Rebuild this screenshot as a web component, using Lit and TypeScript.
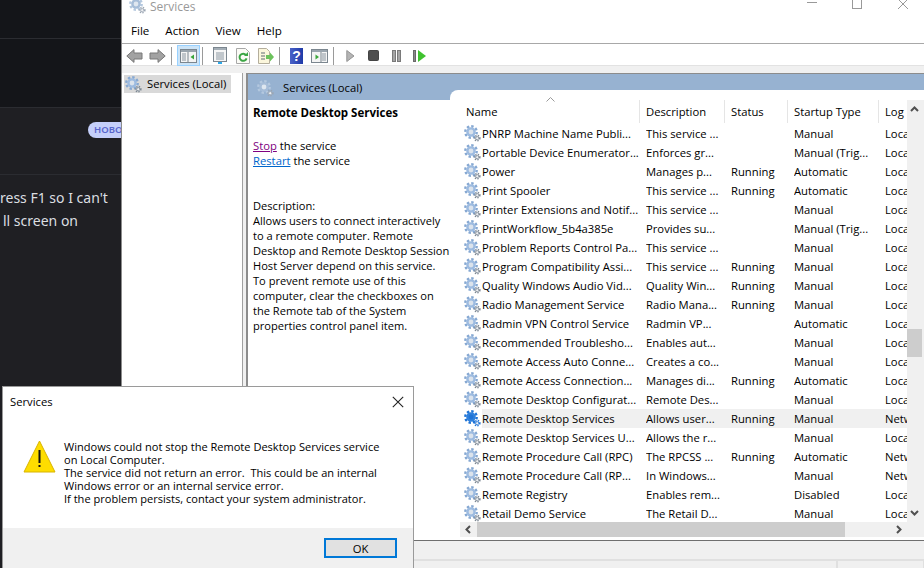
import { LitElement, html, css, svg } from "lit";
import { customElement } from "lit/decorators.js";

type Row = [string, string, string, string, string];
const rows: Row[] = [
  ["PNRP Machine Name Publi...", "This service ...", "", "Manual", "Local"],
  ["Portable Device Enumerator...", "Enforces gr...", "", "Manual (Trig...", "Local"],
  ["Power", "Manages p...", "Running", "Automatic", "Local"],
  ["Print Spooler", "This service ...", "Running", "Automatic", "Local"],
  ["Printer Extensions and Notif...", "This service ...", "", "Manual", "Local"],
  ["PrintWorkflow_5b4a385e", "Provides su...", "", "Manual (Trig...", "Local"],
  ["Problem Reports Control Pa...", "This service ...", "", "Manual", "Local"],
  ["Program Compatibility Assi...", "This service ...", "Running", "Manual", "Local"],
  ["Quality Windows Audio Vid...", "Quality Win...", "Running", "Manual", "Local"],
  ["Radio Management Service", "Radio Mana...", "Running", "Manual", "Local"],
  ["Radmin VPN Control Service", "Radmin VP...", "", "Automatic", "Local"],
  ["Recommended Troublesho...", "Enables aut...", "", "Manual", "Local"],
  ["Remote Access Auto Conne...", "Creates a co...", "", "Manual", "Local"],
  ["Remote Access Connection...", "Manages di...", "Running", "Automatic", "Local"],
  ["Remote Desktop Configurat...", "Remote Des...", "", "Manual", "Local"],
  ["Remote Desktop Services", "Allows user...", "Running", "Manual", "Network"],
  ["Remote Desktop Services U...", "Allows the r...", "", "Manual", "Local"],
  ["Remote Procedure Call (RPC)", "The RPCSS ...", "Running", "Automatic", "Network"],
  ["Remote Procedure Call (RP...", "In Windows...", "", "Manual", "Network"],
  ["Remote Registry", "Enables rem...", "", "Disabled", "Local"],
  ["Retail Demo Service", "The Retail D...", "", "Manual", "Local"],
];

const gear = (sel = false, dim = false) => {
  const a = sel ? "#1f74d6" : dim ? "#b4c8df" : "#86a8d2";
  const b = sel ? "#2f80dc" : dim ? "#a6bdd8" : "#9dbbe0";
  const h = sel ? "#1f74d6" : dim ? "#dfe7f0" : "#dbe3ec";
  const c = sel ? "#1f74d6" : dim ? "#9aa5b2" : "#7c8894";
  return html`<svg class="gear" width="17" height="17" viewBox="0 0 17 17">
    <circle cx="7" cy="7" r="5.7" fill="none" stroke=${a} stroke-width="2.4" stroke-dasharray="2.4 2"></circle>
    <circle cx="7" cy="7" r="3.6" fill=${h} stroke=${b} stroke-width="2.4"></circle>
    <circle cx="13.2" cy="13.2" r="2.6" fill="none" stroke=${c} stroke-width="1.6" stroke-dasharray="1.3 1.2"></circle>
    <circle cx="13.2" cy="13.2" r="1.6" fill="#eef0f2" stroke=${c} stroke-width=".8"></circle>
  </svg>`;
};

const winIcon = (inner: unknown) => html`<svg width="17" height="16" viewBox="0 0 17 16">
  <rect x=".5" y="1.5" width="16" height="13" fill="#f4f4f4" stroke="#7b868f"></rect>
  <rect x="1" y="2" width="15" height="2" fill="#9aa5ae"></rect>
  ${inner}
</svg>`;

const tools = {
  back: html`<svg width="17" height="16" viewBox="0 0 17 16"><path d="M.8 8 8 1.6V5h8v6H8v3.4Z" fill="#a2a2a2" stroke="#787878"></path></svg>`,
  fwd: html`<svg width="17" height="16" viewBox="0 0 17 16"><path d="M16.2 8 9 1.6V5H1v6h8v3.4Z" fill="#a2a2a2" stroke="#787878"></path></svg>`,
  tree: winIcon(svg`<path d="M2 6h4M2 8h4M2 10h4M2 12h4" stroke="#8a96a0"></path><path d="M8 4v10" stroke="#7b868f"></path><path d="M14 6.5v5L10.5 9Z" fill="#3aa63a"></path>`),
  props: html`<svg width="16" height="17" viewBox="0 0 16 17"><rect x="1.5" y=".5" width="13" height="14" fill="#f6f6f6" stroke="#7b868f"></rect><rect x="2" y="1" width="12" height="2" fill="#a4aeb6"></rect><path d="M4 6h8M4 8h8M4 10h8M4 12h8" stroke="#8c98a2"></path><rect x="6" y="15" width="4" height="2" fill="#2fa8e8"></rect></svg>`,
  refresh: html`<svg width="14" height="16" viewBox="0 0 14 16"><path d="M.5.5h9l4 4v11H.5Z" fill="#fbfbf6" stroke="#a8a8a8"></path><path d="M10 7a3.6 3.6 0 1 0 .6 3.4" fill="none" stroke="#3ba544" stroke-width="2"></path><path d="M8 8h4V4Z" fill="#3ba544"></path></svg>`,
  exp: html`<svg width="16" height="16" viewBox="0 0 16 16"><path d="M.5.5h8l3 3v12H.5Z" fill="#fbf6dc" stroke="#b4ae9c"></path><path d="M3 5h4M3 8h4M3 11h4" stroke="#5f6a72"></path><path d="M8 7h4V4.5L16 9l-4 4.5V11H8Z" fill="#6cc25c"></path></svg>`,
  help: html`<svg width="13" height="16" viewBox="0 0 13 16"><defs><linearGradient id="hg" x1="0" x2="1" y1="0" y2="0"><stop offset="0" stop-color="#4a62c8"></stop><stop offset="1" stop-color="#1f3aa8"></stop></linearGradient></defs><rect width="13" height="16" fill="url(#hg)"></rect><text x="6.5" y="13" text-anchor="middle" font-family="Liberation Sans" font-weight="700" font-size="14" fill="#fff">?</text></svg>`,
  wnd2: winIcon(svg`<path d="M10 4v10" stroke="#7b868f"></path><path d="M11 6h4M11 8h4M11 10h4M11 12h4" stroke="#8a96a0"></path><path d="M4.500 6.500v5L8 9Z" fill="#3aa63a"></path>`),
  play: html`<svg width="9" height="16" viewBox="0 0 9 16"><path d="M.8 2.500 8 8 .8 13.500Z" fill="#b4b4b4" stroke="#949494"></path></svg>`,
  stop: html`<svg width="11" height="11" viewBox="0 0 11 11"><rect x=".5" y=".5" width="10" height="10" rx="1" fill="#4e4e4e" stroke="#444"></rect></svg>`,
  pause: html`<svg width="9" height="12" viewBox="0 0 9 12"><rect x=".5" y=".5" width="3" height="11" fill="#a4a4a4" stroke="#7a7a7a"></rect><rect x="5.500" y=".5" width="3" height="11" fill="#a4a4a4" stroke="#7a7a7a"></rect></svg>`,
  resume: html`<svg width="13" height="12" viewBox="0 0 13 12"><rect x=".5" y=".5" width="2" height="11" fill="#8a8a8a" stroke="#6a6a6a"></rect><path d="M5 0 13 6 5 12Z" fill="#3fc22f"></path></svg>`,
};

@customElement("app-root")
export class AppRoot extends LitElement {
  static styles = css`
    :host { display: block; width: 924px; height: 568px; overflow: hidden; position: relative; font-family: "Open Sans", "Noto Sans", sans-serif; font-size: 11.25px; color: #000; }
    .page { display: flex; width: 924px; height: 568px; }

    .dark { width: 121px; flex: none; background: #1f1f23; display: flex; flex-direction: column; overflow: hidden; font-family: "Noto Sans", sans-serif; color: #dbdee1; }
    .d1 { height: 38px; background: #141519; border-bottom: 1px solid #2b2c31; flex: none; }
    .d2 { height: 68px; background: #141519; border-bottom: 1px solid #2b2c31; flex: none; }
    .d3 { border-bottom: 1px solid #2b2c31; flex: none; display: flex; justify-content: flex-end; align-items: flex-start; padding-top: 14px; height: 52px; }
    .badge { width: 33px; height: 16px; background: #c5cffa; border-radius: 8px 0 0 8px; color: #5865cc; font-size: 9.5px; font-weight: 600; line-height: 16px; padding-left: 6px; box-sizing: border-box; white-space: nowrap; overflow: hidden; }
    .msg { padding-top: 11px; font-size: 14px; line-height: 23px; white-space: nowrap; }
    .l2 { display: block; padding-left: 3px; }

    .win { flex: 1; min-width: 0; display: flex; flex-direction: column; background: #fff; border-left: 1px solid #8c8c8c; }
    .title { height: 18px; flex: none; display: flex; align-items: center; color: #999; position: relative; padding-left: 7px; gap: 4px; margin-top: -3px; }
    .title .gear { margin-top: -1px; }
    .title span { font-size: 12px; }
    .ctl { position: absolute; top: 0; }
    .menu { height: 29px; flex: none; display: flex; align-items: center; border-bottom: 1px solid #a8a8a8; box-sizing: border-box; padding: 3px 0 0 9px; gap: 16px; font-size: 11.6px; }
    .tb { height: 22px; flex: none; display: flex; align-items: flex-start; padding: 1px 0 0 1px; box-sizing: border-box; border-bottom: 1px solid #e2e2e2; }
    .btn { width: 23px; height: 21px; display: flex; align-items: center; justify-content: center; box-sizing: border-box; flex: none; }
    .btn.on { background: #cce4f7; border: 1px solid #99d1ff; }
    .sep { width: 1px; height: 18px; background: #9a9a9a; margin: 2px 5px 0 2px; flex: none; }
    .body { flex: 1; min-height: 0; display: flex; background: #f0f0f0; padding-top: 7px; }
    .tree { flex: none; background: #fff; border-right: 1px solid #a0a0a0; padding: 2px 3px 2px 2px; width: 115px; }
    .tnode { height: 18px; width: 107px; background: #d9d9d9; display: flex; align-items: center; gap: 5px; padding-left: 1px; box-sizing: border-box; white-space: nowrap; }
    .tnode .gear { flex: none; }
    .tnode span { margin-top: -1px; }
    .main { margin-left: 3px; flex: 1; min-width: 0; display: flex; flex-direction: column; border-left: 2px solid #8c8c8c; border-top: 1px solid #8c8c8c; background: #fff; }
    .hdr { height: 26px; flex: none; background: #97b2d1; display: flex; align-items: flex-start; padding: 6px 0 0 9px; box-sizing: border-box; gap: 9px; white-space: nowrap; }
    .cols { flex: 1; min-height: 0; display: flex; }
    .detail { width: 197px; flex: none; padding: 4px 0 0 5px; line-height: 15px; color: #000; white-space: nowrap; }
    .detail h3 { margin: 0 0 17px; font-size: 11.5px; font-weight: 700; line-height: 17px; }
    .detail a { text-decoration: underline; color: #0066cc; }
    .detail a.v { color: #800080; }
    .detail .desc { margin-top: 30px; font-size: 11.1px; }
    .list { flex: 1; min-width: 0; margin-top: -10px; background: #fff; border-top-left-radius: 8px; display: grid; grid-template-columns: 1fr 17px; grid-template-rows: 1fr 15px; }
    .tbl { overflow: hidden; padding-top: 10px; display: flex; flex-direction: column; min-width: 0; min-height: 0; }
    .head { display: grid; grid-template-columns: 16px 180px 85px 63px 91px 40px; white-space: nowrap; flex: none; height: 24px; line-height: 24px; }
    .row { display: grid; grid-template-columns: 32px 164px 85px 63px 91px 40px; white-space: nowrap; height: 19px; line-height: 19px; }
    .head div { position: relative; }
    .head div.c + div.c::before { content: ""; position: absolute; left: -7px; top: 0; height: 23px; width: 1px; background: #e5e5e5; }
    .caret { position: absolute; left: 80px; top: -3px; }
    .rows { flex: 1; min-height: 0; overflow: hidden; }
    .row div { overflow: hidden; }
    .ic { padding: 1px 0 0 14px; box-sizing: border-box; height: 19px; }
    .ic .gear { display: block; }
    .row.sel div { background: #f0f0f0; }
    .vs { grid-row: 1 / 3; grid-column: 2; background: #f0f0f0; margin-top: 10px; position: relative; }
    .hs { background: #f0f0f0; position: relative; height: 15px; margin-left: 10px; }
    .vs .th { position: absolute; left: 0; top: 229px; width: 15px; height: 28px; background: #cdcdcd; }
    .hs .th { position: absolute; left: 17px; top: 0; width: 368px; height: 15px; background: #cdcdcd; }
    .arr { position: absolute; }
    .gapb { height: 3px; flex: none; background: #fff; }
    .status { height: 28px; flex: none; border-top: 1px solid #6f6f6f; background: #f0f0f0; box-sizing: border-box; display: flex; flex-direction: column; }
    .s1 { height: 18px; flex: none; border-bottom: 2px solid #e0e0e0; }
    .s2 { flex: 1; display: flex; justify-content: flex-end; }
    .s2 i { display: block; width: 85px; border-left: 2px solid #e0e0e0; border-right: 1px solid #e0e0e0; }

    .dlg { position: absolute; left: 2px; top: 386px; width: 412px; height: 182px; box-sizing: border-box; background: #fff; border: 1px solid #9a9a9a; border-bottom: 0; display: flex; flex-direction: column; }
    .dt { height: 29px; flex: none; display: flex; align-items: center; justify-content: space-between; padding: 0 9px 0 7px; }
    .dm { flex: 1; display: flex; padding: 24px 0 0 20px; gap: 8px; }
    .dm svg { flex: none; }
    .dm p { margin: 0; font-size: 11.05px; line-height: 13px; white-space: nowrap; }
    .df { height: 40px; flex: none; background: #f0f0f0; display: flex; justify-content: flex-end; padding: 10px 16px 0 0; box-sizing: border-box; }
    .ok { width: 73px; height: 20px; box-sizing: border-box; border: 2px solid #0078d7; background: #e1e1e1; display: flex; align-items: center; justify-content: center; }
  `;

  render() {
    return html`<div class="page">
      <div class="dark">
        <div class="d1"></div>
        <div class="d2"></div>
        <div class="d3"><div class="badge">HOBOE</div></div>
        <div class="msg">ress F1 so I can't<span class="l2">ll screen on</span></div>
      </div>
      <div class="win">
        <div class="title">${gear(false, true)}<span>Services</span>
          <svg class="ctl" style="left:684px" width="12" height="10" viewBox="0 0 12 10"><path d="M1 5.500h10" stroke="#999"></path></svg>
          <svg class="ctl" style="left:729px" width="12" height="12" viewBox="0 0 12 12"><rect x="1.500" y="2.500" width="9" height="9" fill="none" stroke="#999"></rect></svg>
          <svg class="ctl" style="left:775px" width="12" height="12" viewBox="0 0 12 12"><path d="M1 2l10 10M11 2 1 12" stroke="#999"></path></svg>
        </div>
        <div class="menu"><span>File</span><span>Action</span><span>View</span><span>Help</span></div>
        <div class="tb">
          <div class="btn">${tools.back}</div><div class="btn">${tools.fwd}</div><div class="sep"></div>
          <div class="btn on">${tools.tree}</div><div class="sep"></div>
          <div class="btn">${tools.props}</div><div class="btn">${tools.refresh}</div><div class="btn">${tools.exp}</div><div class="sep"></div>
          <div class="btn">${tools.help}</div><div class="btn">${tools.wnd2}</div><div class="sep"></div>
          <div class="btn">${tools.play}</div><div class="btn">${tools.stop}</div><div class="btn">${tools.pause}</div><div class="btn">${tools.resume}</div>
        </div>
        <div class="body">
          <div class="tree"><div class="tnode">${gear()}<span>Services (Local)</span></div></div>
          <div class="main">
            <div class="hdr">${gear(false, true)}<span>Services (Local)</span></div>
            <div class="cols">
              <div class="detail">
                <h3>Remote Desktop Services</h3>
                <div><a class="v">Stop</a> the service</div>
                <div><a>Restart</a> the service</div>
                <div class="desc">Description:<br />Allows users to connect interactively<br />to a remote computer. Remote<br />Desktop and Remote Desktop Session<br />Host Server depend on this service.<br />To prevent remote use of this<br />computer, clear the checkboxes on<br />the Remote tab of the System<br />properties control panel item.</div>
              </div>
              <div class="list">
                <div class="tbl">
                  <div class="head">
                    <span></span>
                    <div class="c">Name<svg class="caret" width="9" height="5" viewBox="0 0 9 5"><path d="M.5 4.500 4.500.5l4 4" fill="none" stroke="#9a9a9a"></path></svg></div>
                    <div class="c">Description</div><div class="c">Status</div><div class="c">Startup Type</div><div class="c">Log</div>
                  </div>
                  <div class="rows">
                    ${rows.map((r, i) => html`<div class="row ${i === 15 ? "sel" : ""}">
                      <span class="ic">${gear(i === 15)}</span>
                      <div>${r[0]}</div><div>${r[1]}</div><div>${r[2]}</div><div>${r[3]}</div><div>${r[4]}</div>
                    </div>`)}
                  </div>
                </div>
                <div class="vs">
                  <svg class="arr" style="top:6px;left:3px" width="9" height="6" viewBox="0 0 9 6"><path d="M1 5l3.500-3.500L8 5" fill="none" stroke="#505050" stroke-width="2"></path></svg>
                  <div class="th"></div>
                  <svg class="arr" style="top:410px;left:3px" width="9" height="6" viewBox="0 0 9 6"><path d="M1 1l3.500 3.500L8 1" fill="none" stroke="#505050" stroke-width="2"></path></svg>
                </div>
                <div class="hs">
                  <svg class="arr" style="left:5px;top:3px" width="6" height="9" viewBox="0 0 6 9"><path d="M5 1 1.500 4.500 5 8" fill="none" stroke="#505050" stroke-width="2"></path></svg>
                  <div class="th"></div>
                  <svg class="arr" style="right:5px;top:3px" width="6" height="9" viewBox="0 0 6 9"><path d="M1 1l3.500 3.500L1 8" fill="none" stroke="#505050" stroke-width="2"></path></svg>
                </div>
              </div>
            </div>
            <div class="gapb"></div>
          </div>
        </div>
        <div class="status"><div class="s1"></div><div class="s2"><i></i></div></div>
      </div>
    </div>
    <div class="dlg">
      <div class="dt"><span>Services</span><svg width="12" height="12" viewBox="0 0 12 12"><path d="M.8.8l10.400 10.400M11.200.8.8 11.200" stroke="#222" stroke-width="1.100"></path></svg></div>
      <div class="dm">
        <svg width="33" height="33" viewBox="0 0 33 33"><path d="M16.500 1 32 32H1Z" fill="#fedd00" stroke="#d9b400" stroke-linejoin="round"></path><rect x="15.500" y="10" width="2" height="13" fill="#111"></rect><rect x="15.500" y="25" width="2" height="2" fill="#111"></rect></svg>
        <p>Windows could not stop the Remote Desktop Services service<br />on Local Computer.<br />The service did not return an error.&nbsp; This could be an internal<br />Windows error or an internal service error.<br />If the problem persists, contact your system administrator.</p>
      </div>
      <div class="df"><div class="ok">OK</div></div>
    </div>`;
  }
}
